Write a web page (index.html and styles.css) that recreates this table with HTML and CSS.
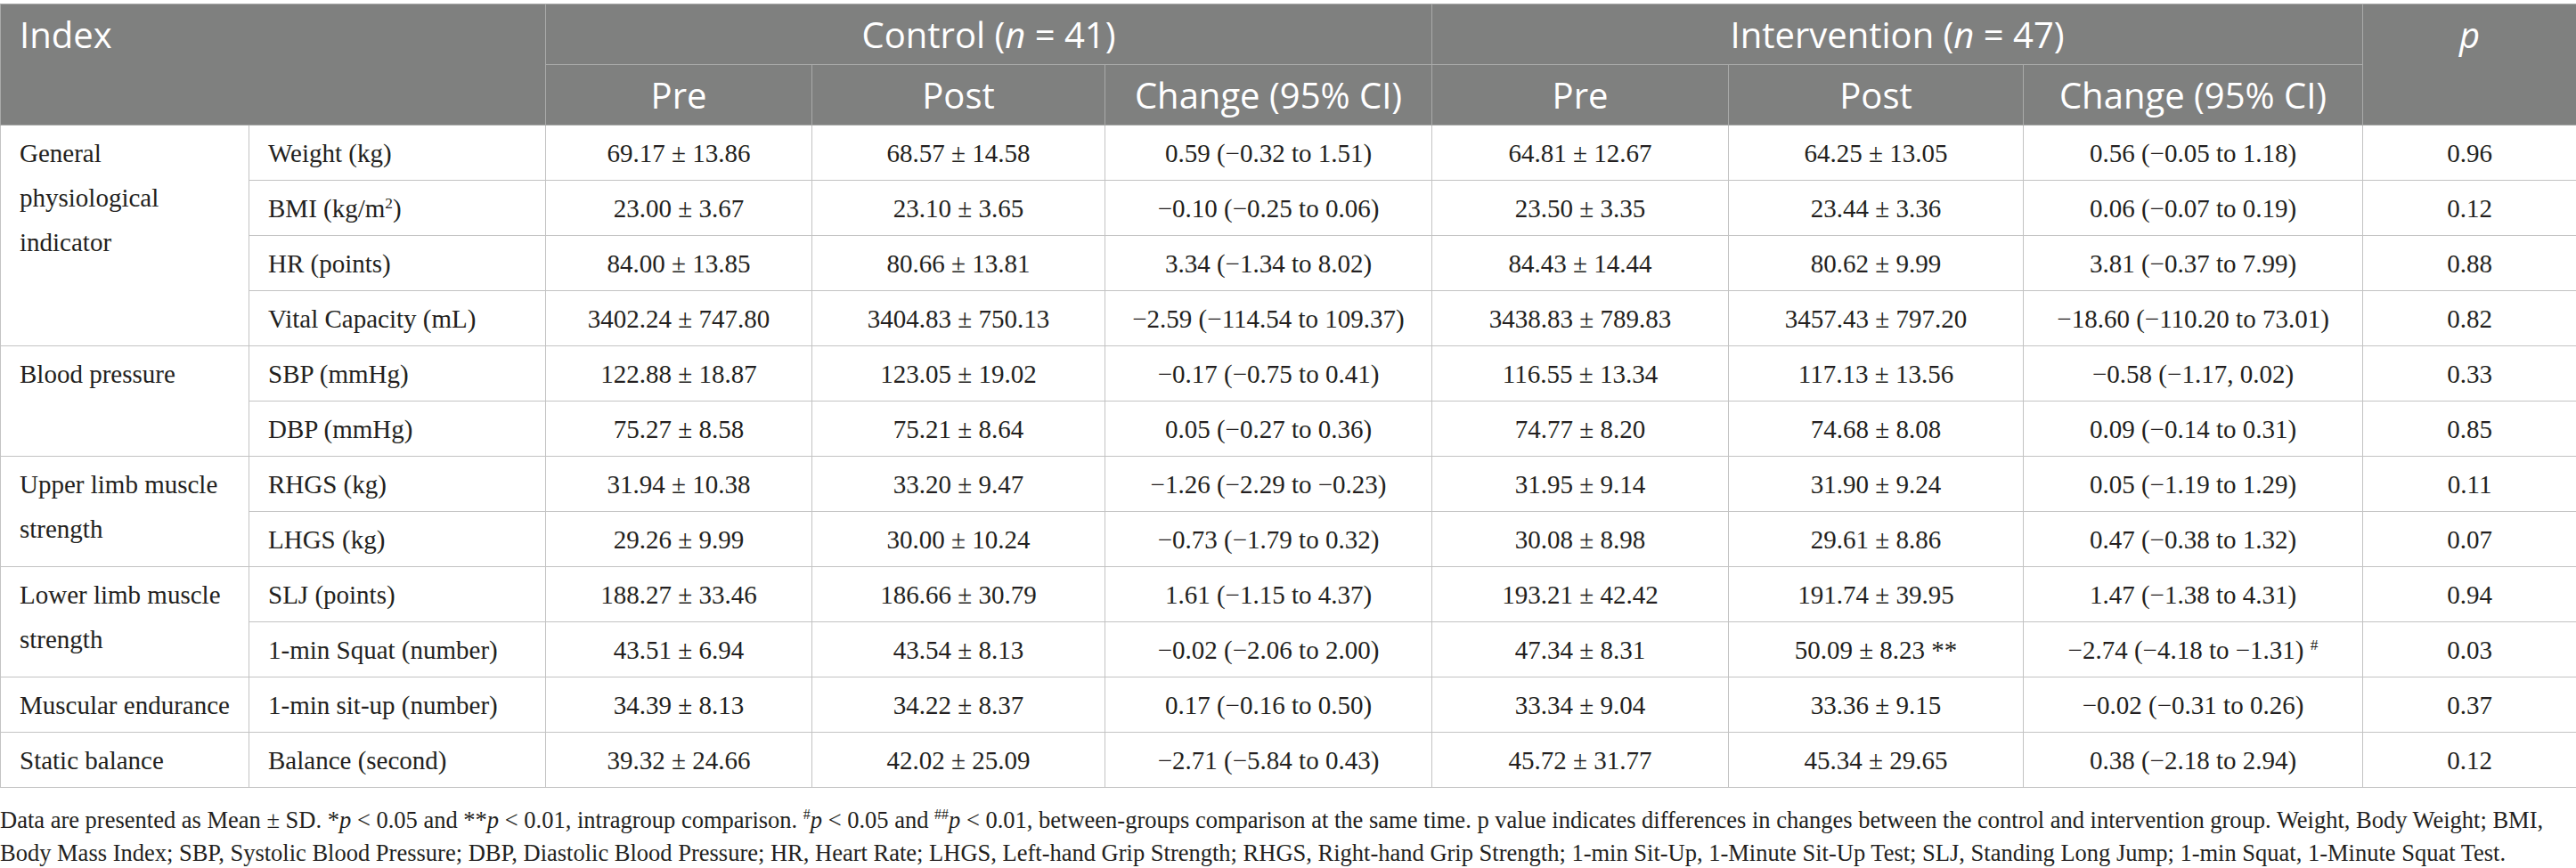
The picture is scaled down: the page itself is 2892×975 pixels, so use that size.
FILE: index.html
```html
<!DOCTYPE html>
<html lang="en">
<head>
<meta charset="utf-8">
<title>Table</title>
<link rel="stylesheet" href="styles.css">
</head>
<body>
<div class="wrap">
<table class="data">
<colgroup>
<col class="c-cat"><col class="c-sub"><col class="c-pre"><col class="c-post"><col class="c-chg"><col class="c-pre2"><col class="c-post2"><col class="c-chg2"><col class="c-p">
</colgroup>
<thead>
<tr>
<th class="idx" colspan="2" rowspan="2">Index</th>
<th colspan="3">Control (<i>n</i> = 41)</th>
<th colspan="3">Intervention (<i>n</i> = 47)</th>
<th class="pcol" rowspan="2"><i>p</i></th>
</tr>
<tr>
<th>Pre</th><th>Post</th><th>Change (95% CI)</th>
<th>Pre</th><th>Post</th><th>Change (95% CI)</th>
</tr>
</thead>
<tbody>
<tr><td class="cat" rowspan="4">General physiological indicator</td><td class="sub">Weight (kg)</td><td>69.17 ± 13.86</td><td>68.57 ± 14.58</td><td>0.59 (−0.32 to 1.51)</td><td>64.81 ± 12.67</td><td>64.25 ± 13.05</td><td>0.56 (−0.05 to 1.18)</td><td>0.96</td></tr>
<tr><td class="sub">BMI (kg/m<sup>2</sup>)</td><td>23.00 ± 3.67</td><td>23.10 ± 3.65</td><td>−0.10 (−0.25 to 0.06)</td><td>23.50 ± 3.35</td><td>23.44 ± 3.36</td><td>0.06 (−0.07 to 0.19)</td><td>0.12</td></tr>
<tr><td class="sub">HR (points)</td><td>84.00 ± 13.85</td><td>80.66 ± 13.81</td><td>3.34 (−1.34 to 8.02)</td><td>84.43 ± 14.44</td><td>80.62 ± 9.99</td><td>3.81 (−0.37 to 7.99)</td><td>0.88</td></tr>
<tr><td class="sub">Vital Capacity (mL)</td><td>3402.24 ± 747.80</td><td>3404.83 ± 750.13</td><td>−2.59 (−114.54 to 109.37)</td><td>3438.83 ± 789.83</td><td>3457.43 ± 797.20</td><td>−18.60 (−110.20 to 73.01)</td><td>0.82</td></tr>
<tr><td class="cat" rowspan="2">Blood pressure</td><td class="sub">SBP (mmHg)</td><td>122.88 ± 18.87</td><td>123.05 ± 19.02</td><td>−0.17 (−0.75 to 0.41)</td><td>116.55 ± 13.34</td><td>117.13 ± 13.56</td><td>−0.58 (−1.17, 0.02)</td><td>0.33</td></tr>
<tr><td class="sub">DBP (mmHg)</td><td>75.27 ± 8.58</td><td>75.21 ± 8.64</td><td>0.05 (−0.27 to 0.36)</td><td>74.77 ± 8.20</td><td>74.68 ± 8.08</td><td>0.09 (−0.14 to 0.31)</td><td>0.85</td></tr>
<tr><td class="cat" rowspan="2">Upper limb muscle strength</td><td class="sub">RHGS (kg)</td><td>31.94 ± 10.38</td><td>33.20 ± 9.47</td><td>−1.26 (−2.29 to −0.23)</td><td>31.95 ± 9.14</td><td>31.90 ± 9.24</td><td>0.05 (−1.19 to 1.29)</td><td>0.11</td></tr>
<tr><td class="sub">LHGS (kg)</td><td>29.26 ± 9.99</td><td>30.00 ± 10.24</td><td>−0.73 (−1.79 to 0.32)</td><td>30.08 ± 8.98</td><td>29.61 ± 8.86</td><td>0.47 (−0.38 to 1.32)</td><td>0.07</td></tr>
<tr><td class="cat" rowspan="2">Lower limb muscle strength</td><td class="sub">SLJ (points)</td><td>188.27 ± 33.46</td><td>186.66 ± 30.79</td><td>1.61 (−1.15 to 4.37)</td><td>193.21 ± 42.42</td><td>191.74 ± 39.95</td><td>1.47 (−1.38 to 4.31)</td><td>0.94</td></tr>
<tr><td class="sub">1-min Squat (number)</td><td>43.51 ± 6.94</td><td>43.54 ± 8.13</td><td>−0.02 (−2.06 to 2.00)</td><td>47.34 ± 8.31</td><td>50.09 ± 8.23 **</td><td>−2.74 (−4.18 to −1.31) <sup>#</sup></td><td>0.03</td></tr>
<tr><td class="cat">Muscular endurance</td><td class="sub">1-min sit-up (number)</td><td>34.39 ± 8.13</td><td>34.22 ± 8.37</td><td>0.17 (−0.16 to 0.50)</td><td>33.34 ± 9.04</td><td>33.36 ± 9.15</td><td>−0.02 (−0.31 to 0.26)</td><td>0.37</td></tr>
<tr><td class="cat">Static balance</td><td class="sub">Balance (second)</td><td>39.32 ± 24.66</td><td>42.02 ± 25.09</td><td>−2.71 (−5.84 to 0.43)</td><td>45.72 ± 31.77</td><td>45.34 ± 29.65</td><td>0.38 (−2.18 to 2.94)</td><td>0.12</td></tr>
</tbody>
</table>
<p class="note">Data are presented as Mean ± SD. *<i>p</i> &lt; 0.05 and **<i>p</i> &lt; 0.01, intragroup comparison. <sup>#</sup><i>p</i> &lt; 0.05 and <sup>##</sup><i>p</i> &lt; 0.01, between-groups comparison at the same time. p value indicates differences in changes between the control and intervention group. Weight, Body Weight; BMI,<br>Body Mass Index; SBP, Systolic Blood Pressure; DBP, Diastolic Blood Pressure; HR, Heart Rate; LHGS, Left-hand Grip Strength; RHGS, Right-hand Grip Strength; 1-min Sit-Up, 1-Minute Sit-Up Test; SLJ, Standing Long Jump; 1-min Squat, 1-Minute Squat Test.</p>
</div>
</body>
</html>
```
FILE: styles.css
```css
html, body {
  margin: 0;
  padding: 0;
  background: #ffffff;
}
.wrap {
  padding-top: 4px;
  width: 2892px;
}
.data {
  border-collapse: collapse;
  table-layout: fixed;
  width: 2892px;
  font-family: "Liberation Serif", "Times New Roman", serif;
  font-size: 29px;
  color: #231f20;
}
.c-cat { width: 279px; }
.c-sub { width: 333px; }
.c-pre { width: 299px; }
.c-post { width: 329px; }
.c-chg { width: 367px; }
.c-pre2 { width: 333px; }
.c-post2 { width: 331px; }
.c-chg2 { width: 381px; }
.c-p { width: 240px; }

.data th {
  background: #7f807f;
  color: #ffffff;
  font-family: "Open Sans", "DejaVu Sans", sans-serif;
  font-weight: 400;
  font-size: 40px;
  line-height: 48px;
  padding: 10px 0 9px;
  border: 1px solid #a9aaa9;
  text-align: center;
  vertical-align: middle;
  white-space: nowrap;
}
.data th.idx {
  text-align: left;
  vertical-align: top;
  padding-left: 21px;
}
.data th.pcol {
  vertical-align: top;
}
.data td {
  border: 1px solid #c3c3c3;
  line-height: 50px;
  padding: 6px 4px 5px;
  text-align: center;
  vertical-align: middle;
  white-space: nowrap;
}
.data td.cat {
  text-align: left;
  vertical-align: top;
  white-space: normal;
  padding-left: 21px;
  padding-right: 8px;
}
.data td.sub {
  text-align: left;
  padding-left: 21px;
}
.data sup {
  font-size: 0.6em;
  line-height: 0;
  vertical-align: 0.6em;
}
.note {
  margin: 18px 0 0;
  font-family: "Liberation Serif", "Times New Roman", serif;
  font-size: 26.5px;
  line-height: 37px;
  color: #231f20;
  white-space: nowrap;
}
.note sup {
  font-size: 0.6em;
  line-height: 0;
  vertical-align: 0.6em;
}
```
